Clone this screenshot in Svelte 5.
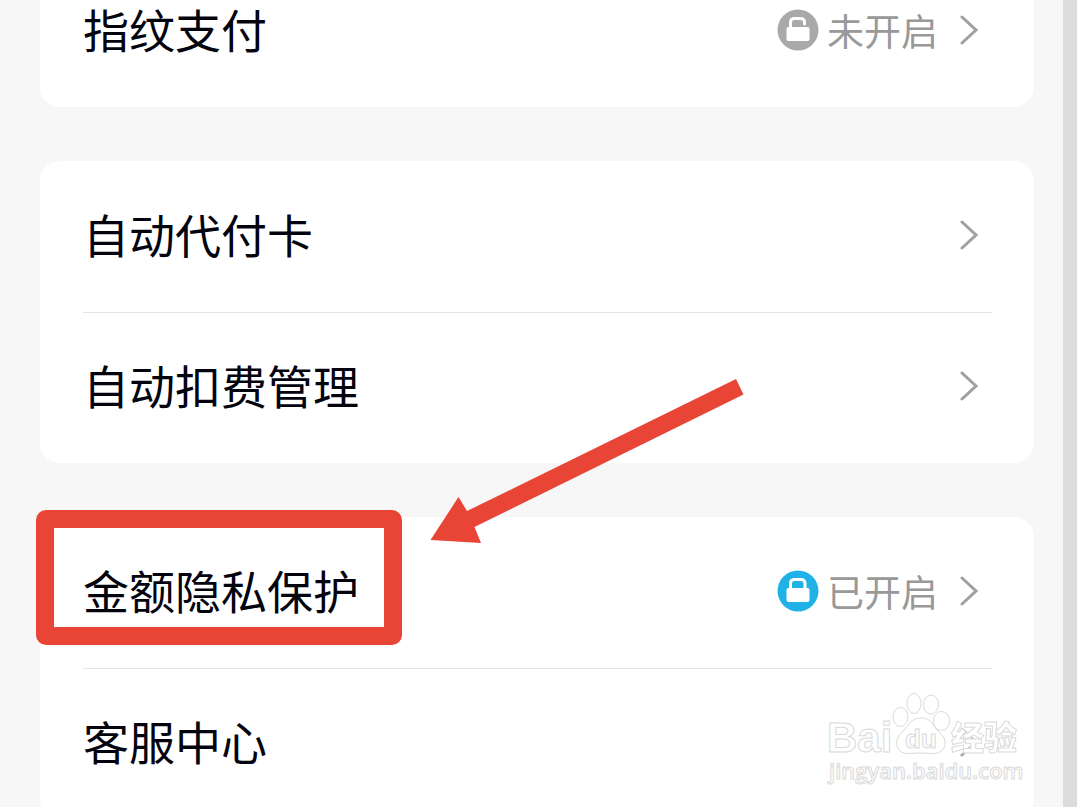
<script>
  const groups = [
    [{ label: '指纹支付', status: '未开启', on: false }],
    [{ label: '自动代付卡' }, { label: '自动扣费管理' }],
    [{ label: '金额隐私保护', status: '已开启', on: true, marked: true }, { label: '客服中心' }]
  ];
</script>

<div class="page">
  <main>
    {#each groups as rows}
      <section class="card">
        {#each rows as row}
          <div class="item">
            <button class="row" type="button">
              <span class="label">{row.label}</span>
              {#if row.status}
                <svg class="lock" class:on={row.on} viewBox="0 0 42 42" aria-hidden="true">
                  <circle cx="21" cy="21" r="20.5" />
                  <rect x="9.5" y="18" width="23" height="14" rx="2" fill="#fff" />
                  {#if row.on}
                    <path d="M13.500 19v-5.500q0-4 4-4h6.500q4 0 4 4v5.500" />
                  {:else}
                    <path d="M13.500 19v-5.500q0-4 4-4h6q4 0 4 4v1.500" />
                  {/if}
                </svg>
                <span class="status">{row.status}</span>
              {/if}
              <svg class="chevron" viewBox="0 0 18 30" aria-hidden="true">
                <path d="M2 2L16 15L2 28" />
              </svg>
            </button>
            {#if row.marked}
              <div class="frame"></div>
              <svg class="arrow" viewBox="0 0 314 166" aria-hidden="true">
                <path d="M0.500 162L28.500 119L37 133L306 1L313.500 16.500L44.500 149L51 165Z" />
              </svg>
            {/if}
          </div>
        {/each}
      </section>
    {/each}
  </main>
  <div class="rail"></div>

  <svg class="watermark" viewBox="0 0 200 96" aria-hidden="true">
    <text class="brand" x="1" y="60">Bai</text>
    <g class="paw">
      <ellipse cx="74.500" cy="25" rx="7.500" ry="9.500" />
      <ellipse cx="88" cy="11.500" rx="7" ry="10" />
      <ellipse cx="105" cy="12.500" rx="7.500" ry="9.500" />
      <ellipse cx="115.500" cy="29" rx="8" ry="9.500" />
      <path d="M95 26C85 26 83 33 78 38C71 44 69 50 72 56C76 64 85 61 95 61C105 61 113 64 118 56C121 49 118 44 111 38C106 32 105 26 95 26Z" />
    </g>
    <text class="du" x="79" y="56">du</text>
    <text class="cn" x="125" y="58">经验</text>
    <text class="site" x="3" y="87">jingyan.baidu.com</text>
  </svg>
</div>

<style>
  :global(body) {
    margin: 0;
    background: #f7f7f7;
  }

  .page {
    position: relative;
    display: flex;
    height: 100vh;
    overflow: hidden;
    font-family: "Noto Sans CJK SC", sans-serif;
  }

  main {
    flex: 1;
    display: flex;
    flex-direction: column;
    gap: 54px;
    margin-top: -44px;
    padding: 0 29px 0 40px;
  }

  .rail {
    width: 14px;
    background: #dcdcdc;
  }

  .card {
    padding: 0 42px 0 43px;
    border-radius: 20px;
    background: #fff;
  }

  .item {
    position: relative;
  }

  .item + .item {
    border-top: 1px solid #e4e4e4;
  }

  .row {
    display: flex;
    align-items: center;
    width: 100%;
    min-height: 151px;
    padding: 0 14px 4px 0;
    border: 0;
    background: none;
    font: inherit;
    text-align: left;
    cursor: pointer;
  }

  .item + .item .row {
    min-height: 150px;
  }

  .label {
    flex: 1;
    padding-bottom: 4px;
    color: #04040f;
    font-size: 46px;
    line-height: 48px;
  }

  .lock {
    width: 42px;
    height: 42px;
    margin-right: 8px;
    fill: #a9a9a9;
  }

  .lock.on {
    fill: #20b2e6;
  }

  .lock path {
    fill: none;
    stroke: #fff;
    stroke-width: 3;
    stroke-linecap: round;
  }

  .status {
    margin-right: 22px;
    color: #999;
    font-size: 37px;
    line-height: 48px;
  }

  .chevron {
    width: 18px;
    height: 30px;
    fill: none;
    stroke: #a0a0a0;
    stroke-width: 3;
    stroke-linecap: round;
  }

  .frame {
    position: absolute;
    top: -7px;
    left: -47px;
    box-sizing: border-box;
    width: 366px;
    height: 135px;
    border: 18px solid #e84537;
    border-radius: 10px;
    pointer-events: none;
  }

  .arrow {
    position: absolute;
    top: -139px;
    left: 347px;
    width: 314px;
    height: 166px;
    fill: #e84537;
    pointer-events: none;
  }

  .watermark {
    position: absolute;
    right: 51px;
    bottom: 19px;
    width: 200px;
    height: 96px;
    fill: #fff;
    stroke: #d9d9d9;
    stroke-width: 1;
    pointer-events: none;
  }

  .brand {
    font: bold 42px "Liberation Sans", sans-serif;
  }

  .du {
    font: bold 26px "Liberation Sans", sans-serif;
  }

  .cn {
    font: 900 33px "Noto Sans CJK SC", sans-serif;
    filter: drop-shadow(0 0 1px #fff);
  }

  .site {
    font: 600 22px "Open Sans", sans-serif;
  }
</style>
